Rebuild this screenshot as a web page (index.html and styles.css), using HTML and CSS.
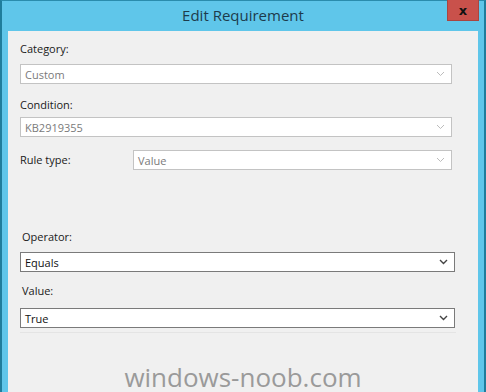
FILE: index.html
```html
<!DOCTYPE html>
<html lang="en">

<head>
    <meta charset="UTF-8">
    <title>Edit Requirement</title>
    <link rel="stylesheet" href="styles.css">
</head>

<body>
    <div class="window">
        <div class="title-bar">
            <span class="title">Edit Requirement</span>
            <button class="close-btn" type="button">x</button>
        </div>

        <div class="panel">
            <div class="field category">
                <label class="label">Category:</label>
                <div class="combo disabled">
                    <span>Custom</span>
                    <svg class="chevron" viewBox="0 0 9 6" width="9" height="6"><path d="M1 1l3.5 3.5L8 1" /></svg>
                </div>
            </div>

            <div class="field condition">
                <label class="label">Condition:</label>
                <div class="combo disabled">
                    <span>KB2919355</span>
                    <svg class="chevron" viewBox="0 0 9 6" width="9" height="6"><path d="M1 1l3.5 3.5L8 1" /></svg>
                </div>
            </div>

            <div class="field-row">
                <label class="label">Rule type:</label>
                <div class="combo disabled">
                    <span>Value</span>
                    <svg class="chevron" viewBox="0 0 9 6" width="9" height="6"><path d="M1 1l3.5 3.5L8 1" /></svg>
                </div>
            </div>

            <div class="group">
                <div class="field operator">
                    <label class="label">Operator:</label>
                    <div class="combo">
                        <span>Equals</span>
                        <svg class="chevron" viewBox="0 0 9 6" width="9" height="6"><path d="M1 1l3.5 3.5L8 1" /></svg>
                    </div>
                </div>

                <div class="field value">
                    <label class="label">Value:</label>
                    <div class="combo">
                        <span>True</span>
                        <svg class="chevron" viewBox="0 0 9 6" width="9" height="6"><path d="M1 1l3.5 3.5L8 1" /></svg>
                    </div>
                </div>
            </div>

            <div class="separator"></div>

            <div class="watermark">windows-noob.com</div>
        </div>
    </div>
</body>

</html>
```

FILE: styles.css
```css
* {
    margin: 0;
    padding: 0;
    box-sizing: border-box;
}

html,
body {
    width: 486px;
    height: 392px;
    overflow: hidden;
}

body {
    font-family: "Open Sans", "Noto Sans", sans-serif;
    font-size: 11px;
    color: #1a1a1a;
}

.window {
    height: 392px;
    background: #5fc6ea;
    border-left: 2px solid #1f7d9c;
    border-right: 2px solid #1f7d9c;
    border-top: 1px solid #2a8cad;
    padding: 0 6px 0 6px;
    display: flex;
    flex-direction: column;
}

.title-bar {
    height: 30px;
    position: relative;
    display: flex;
    align-items: center;
    justify-content: center;
    flex-shrink: 0;
}

.title {
    font-size: 15px;
    color: #1d3b4c;
    padding-bottom: 3px;
}

.close-btn {
    position: absolute;
    top: -1px;
    right: -1px;
    width: 32px;
    height: 21px;
    background: #c9514b;
    border: 1px solid #a94540;
    border-top: none;
    color: #111;
    font-family: "DejaVu Sans", sans-serif;
    font-weight: bold;
    font-size: 13px;
    line-height: 17px;
}

.panel {
    flex: 1;
    min-height: 0;
    background: #f0f0f0;
    padding: 11px 0 0 12px;
    display: flex;
    flex-direction: column;
}

.label {
    display: block;
    height: 14px;
    line-height: 14px;
    color: #1a1a1a;
}

.field {
    display: flex;
    flex-direction: column;
    width: 432px;
}

.category {
    gap: 8px;
    margin-bottom: 14px;
}

.condition {
    gap: 5px;
    margin-bottom: 13px;
}

.field-row {
    display: flex;
    align-items: center;
    width: 432px;
}

.field-row .label {
    width: 113px;
}

.field-row .combo {
    flex: 1;
}

.combo {
    height: 20px;
    background: #fff;
    border: 1px solid #7a7a7a;
    display: flex;
    align-items: center;
    justify-content: space-between;
    padding: 0 6px 0 4px;
    color: #111;
}

.combo.disabled {
    border-color: #c3c3c3;
    color: #7a7a7a;
}

.chevron {
    fill: none;
    stroke: #444;
    stroke-width: 1.4;
}

.combo.disabled .chevron {
    stroke: #bcbcbc;
    stroke-width: 1;
}

.group {
    margin-top: 60px;
}

.group .field {
    width: 435px;
}

.group .label {
    padding-left: 2px;
}

.operator {
    gap: 8px;
    margin-bottom: 12px;
}

.value {
    gap: 10px;
    margin-bottom: 4px;
}

.separator {
    width: 436px;
    height: 1px;
    background: #e4e4e4;
}

.watermark {
    margin: 30px 0 0 -12px;
    text-align: center;
    font-size: 26px;
    line-height: 28px;
    color: #9a9a9a;
}
```
